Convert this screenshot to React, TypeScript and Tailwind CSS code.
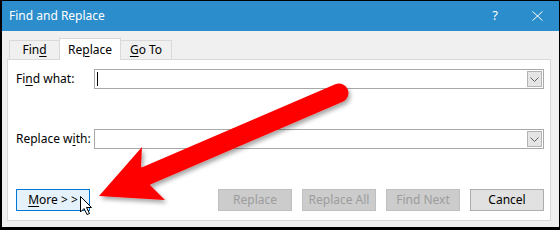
import React from 'react';

const font = { fontFamily: '"Segoe UI", "Noto Sans", "Open Sans", sans-serif' };

function Ul({ children }: { children: React.ReactNode }) {
  return <span className="underline underline-offset-2 decoration-1">{children}</span>;
}

function Combo({ caret }: { caret?: boolean }) {
  return (
    <div className="flex h-[20px] flex-1 items-stretch border border-[#a9a9a9] bg-white">
      <div className="flex flex-1 items-center pl-[2px]">
        {caret && <div className="h-[14px] w-px bg-black" />}
      </div>
      <div className="m-px flex w-[15px] items-center justify-center border border-[#b4b4b4] bg-[#e5e5e5]">
        <svg width="9" height="5" viewBox="0 0 9 5">
          <path d="M0.5 0.5 L4.5 4.5 L8.5 0.5" fill="none" stroke="#5f5f5f" strokeWidth="1" />
        </svg>
      </div>
    </div>
  );
}

function Btn({ label, kind }: { label: React.ReactNode; kind: 'primary' | 'disabled' | 'normal' }) {
  const cls =
    kind === 'primary'
      ? 'border-[#0078d7] bg-[#e5f1fb] text-black'
      : kind === 'disabled'
        ? 'border-[#bfbfbf] bg-[#cccccc] text-[#9c9c9c]'
        : 'border-[#adadad] bg-[#e1e1e1] text-black';
  return (
    <div className={`flex h-[22px] w-[74px] items-center justify-center border text-[12px] ${cls}`}>{label}</div>
  );
}

export default function App() {
  return (
    <div className="relative h-[230px] w-[560px] text-black" style={font}>
      <div className="flex h-full w-full flex-col border-t border-r border-l-2 border-b-[3px] border-black bg-[#f0f0f0]">
        <div className="flex h-[30px] items-center bg-[#2b8dcc] pl-[7px] text-white">
          <span className="text-[12px]">Find and Replace</span>
          <span className="ml-auto mr-[34px] text-[13px]">?</span>
          <svg className="mr-[16px]" width="11" height="10" viewBox="0 0 11 10">
            <path d="M0.5 0.5 L10.5 9.5 M10.5 0.5 L0.5 9.5" stroke="white" strokeWidth="1" />
          </svg>
        </div>
        <div className="flex flex-1 flex-col pt-[7px] pl-[5px] pr-[8px] pb-[6px]">
          <div className="flex items-end pl-[2px]">
            <div className="flex h-[19px] w-[51px] items-center justify-center border border-b-0 border-[#d9d9d9] text-[12px]">
              Fin<Ul>d</Ul>
            </div>
            <div className="relative z-10 -mb-px -ml-px flex h-[22px] w-[62px] items-center justify-center border border-b-0 border-[#d9d9d9] bg-white text-[12px]">
              Re<Ul>p</Ul>lace
            </div>
            <div className="-ml-px flex h-[19px] w-[52px] items-center justify-center border border-b-0 border-[#d9d9d9] text-[12px]">
              <Ul>G</Ul>o To
            </div>
          </div>
          <div className="flex flex-1 flex-col border border-[#d9d9d9] bg-white pt-[9px] pl-[8px] pr-[6px]">
            <div className="flex items-center">
              <div className="w-[78px] text-[12px]">
                Fi<Ul>n</Ul>d what:
              </div>
              <Combo caret />
            </div>
            <div className="mt-[40px] flex items-center">
              <div className="w-[78px] text-[12px]">
                Replace w<Ul>i</Ul>th:
              </div>
              <Combo />
            </div>
            <div className="mt-[40px] flex items-center">
              <Btn
                kind="primary"
                label={
                  <>
                    <Ul>M</Ul>ore &gt; &gt;
                  </>
                }
              />
              <div className="ml-auto flex gap-[10px]">
                <Btn kind="disabled" label="Replace" />
                <Btn kind="disabled" label="Replace All" />
                <Btn kind="disabled" label="Find Next" />
                <Btn kind="normal" label="Cancel" />
              </div>
            </div>
          </div>
        </div>
      </div>

      {/* red arrow and mouse pointer lie over the dialog */}
      <svg className="pointer-events-none absolute left-0 top-0" width="560" height="230" viewBox="0 0 560 230">
        <defs>
          <filter id="sh" x="-20%" y="-20%" width="140%" height="140%">
            <feDropShadow dx="2" dy="3" stdDeviation="2" floodColor="#000" floodOpacity="0.35" />
          </filter>
        </defs>
        <g filter="url(#sh)" fill="#ff0000">
          <line x1="339" y1="93" x2="146" y2="176" stroke="#ff0000" strokeWidth="19" strokeLinecap="round" />
          <polygon points="99,196 142,147 141,166 150,185 165,200" />
        </g>
        <path
          d="M80.5 196.5 L80.5 212 L84 208.5 L87 214.5 L89.5 213.5 L86.5 207.5 L91.5 207.5 Z"
          fill="white"
          stroke="black"
          strokeWidth="1"
          strokeLinejoin="round"
        />
      </svg>
    </div>
  );
}
